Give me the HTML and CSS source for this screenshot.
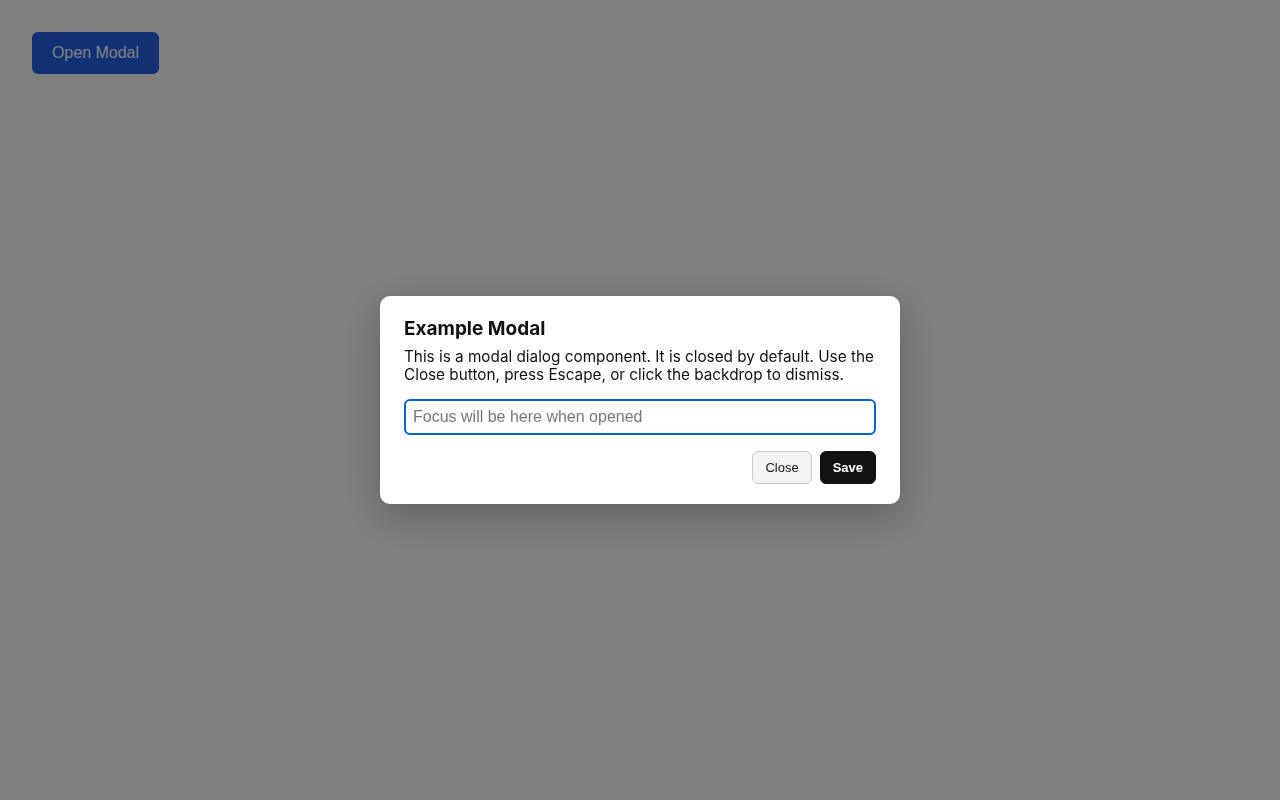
FILE: index.html
```html
<!DOCTYPE html>
<html lang="en">
<head>
    <meta charset="UTF-8">
    <meta name="viewport" content="width=device-width, initial-scale=1.0">
    <title>Modal</title>
    <link rel="stylesheet" href="styles.css">
</head>
<body>
    <button class="open-btn" type="button">Open Modal</button>

    <!-- Backdrop + dialog -->
    <div class="backdrop">
        <div class="modal" role="dialog" aria-labelledby="modal-title">
            <h2 class="modal-title" id="modal-title">Example Modal</h2>
            <p class="modal-text">
                This is a modal dialog component. It is closed by default. Use the
                Close button, press Escape, or click the backdrop to dismiss.
            </p>
            <input class="modal-input" type="text" placeholder="Focus will be here when opened">
            <div class="modal-actions">
                <button class="btn btn-close" type="button">Close</button>
                <button class="btn btn-save" type="button">Save</button>
            </div>
        </div>
    </div>
</body>
</html>
```

FILE: styles.css
```css
* {
    margin: 0;
    padding: 0;
    box-sizing: border-box;
}

body {
    font-family: Inter, "Noto Sans", sans-serif;
    background: #fff;
    min-height: 100vh;
    padding: 32px;
    color: #111;
}

.open-btn {
    font-family: "Liberation Sans", Arial, sans-serif;
    font-size: 16px;
    color: #fff;
    background: #2563eb;
    border: none;
    border-radius: 6px;
    width: 127px;
    height: 42px;
}

.backdrop {
    position: fixed;
    inset: 0;
    background: rgba(0, 0, 0, 0.5);
    display: flex;
    align-items: center;
    justify-content: center;
}

.modal {
    background: #fff;
    width: 520px;
    border-radius: 10px;
    padding: 22px 24px 20px;
    box-shadow: 0 12px 36px rgba(0, 0, 0, 0.25);
}

.modal-title {
    font-size: 19px;
    font-weight: 700;
    line-height: 22px;
    margin-bottom: 8px;
}

.modal-text {
    font-size: 15.3px;
    line-height: 18px;
    margin-bottom: 15px;
}

.modal-input {
    display: block;
    width: 100%;
    height: 36px;
    padding: 0 7px;
    font-family: "Liberation Sans", Arial, sans-serif;
    font-size: 16px;
    border: 2px solid #0b63ce;
    border-radius: 6px;
    outline: none;
    margin-bottom: 16px;
}

.modal-input::placeholder {
    color: #767676;
}

.modal-actions {
    display: flex;
    justify-content: flex-end;
    gap: 8px;
}

.btn {
    font-family: "Liberation Sans", Arial, sans-serif;
    font-size: 13px;
    height: 33px;
    border-radius: 6px;
    padding: 0 12px;
}

.btn-close {
    background: #f3f3f3;
    border: 1px solid #ccc;
    color: #111;
}

.btn-save {
    background: #111;
    border: 1px solid #111;
    color: #fff;
    font-weight: 700;
}
```
